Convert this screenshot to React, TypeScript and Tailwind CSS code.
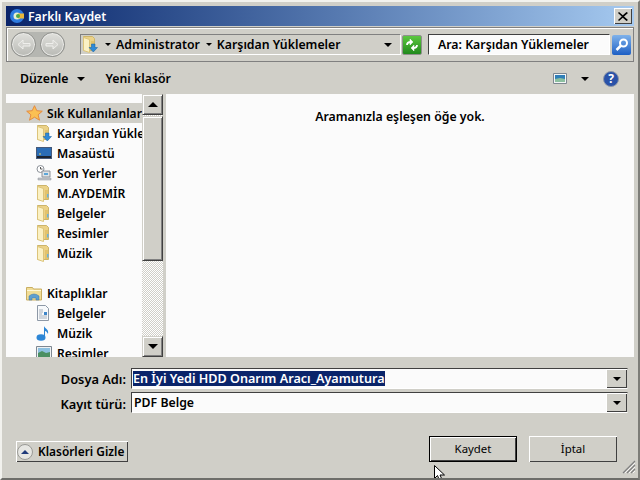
import type { ReactNode } from 'react'

const face = "font-['Noto_Sans','DejaVu_Sans',sans-serif]"

function Folder({ arrow }: { arrow?: boolean }) {
  return (
    <svg width="16" height="17" viewBox="0 0 16 17">
      <path d="M1.500.500h9l2 2v12h-11z" fill="#ecd288" stroke="#cdb56a" />
      <path d="M1.500 1.500l6 2v13l-6-2z" fill="#fbf1c4" stroke="#dcc47a" />
      <path d="M9 5h3v9H9z" fill="#e2c36c" />
      {arrow ? <path d="M9.500 8h3.500v3.500h2.500L11.300 16 7 11.500h2.500z" fill="#2f8ad8" stroke="#14609f" strokeWidth="0.500" /> : <path d="M11 9h1.500v3.500H11z" fill="#6cb3da" />}
    </svg>
  )
}

function Star() {
  return (
    <svg width="17" height="16" viewBox="0 0 17 16">
      <path d="M8.500 .700l2.300 5 5.500.500-4.200 3.600 1.400 5.400-5-3-5 3 1.400-5.400L.700 6.200l5.500-.500z" fill="#fbc053" stroke="#e58b3e" />
    </svg>
  )
}

function Desktop() {
  return (
    <svg width="16" height="14" viewBox="0 0 16 14">
      <path d="M0 1h16v12H0z" fill="#45597a" />
      <path d="M1 2h14v8H1z" fill="#2a6cb5" />
      <path d="M1 10h14v2H1z" fill="#1c2430" />
      <path d="M3 8l1-1 1 1-1 1z" fill="#e9d66b" />
    </svg>
  )
}

function Recent() {
  return (
    <svg width="16" height="16" viewBox="0 0 16 16">
      <circle cx="4.500" cy="4" r="3.500" fill="#fff" stroke="#8d9299" />
      <path d="M4.500 2v2h2" fill="none" stroke="#555" />
      <path d="M6 6h8v6H6z" fill="#dfe3e6" stroke="#8d9299" />
      <path d="M8 8h4v2H8z" fill="#5ca6d8" />
      <path d="M2 13h13v2H2z" fill="#c3c7cb" stroke="#8d9299" strokeWidth="0.500" />
    </svg>
  )
}

function Library() {
  return (
    <svg width="16" height="15" viewBox="0 0 16 15">
      <path d="M.500 14V1.500h6l1 1.500h8v11z" fill="#f1dd97" stroke="#c9ae62" />
      <path d="M1 4h14v1H1z" fill="#fff8d8" />
      <path d="M3 14v-4q5-4 10 0v4h-3v-2H6v2z" fill="#5f9fd0" stroke="#3b76a8" strokeWidth="0.500" />
    </svg>
  )
}

function DocIcon() {
  return (
    <svg width="14" height="16" viewBox="0 0 14 16">
      <path d="M1.500.500h8l3 3v12h-11z" fill="#f7f9fb" stroke="#8d98a6" />
      <path d="M3 5h4M3 7h4M3 9h3M3 11h8M3 13h8" stroke="#a7b0bc" />
      <path d="M8 7h3v3H8z" fill="#3f86c9" />
    </svg>
  )
}

function Note() {
  return (
    <svg width="14" height="16" viewBox="0 0 14 16">
      <ellipse cx="5" cy="12.500" rx="4.500" ry="3.200" fill="#2c86d6" />
      <path d="M8 12V1c1 3 5 3 4 8-1-2-2-3-3-3v6z" fill="#2c86d6" />
    </svg>
  )
}

function Picture() {
  return (
    <svg width="16" height="14" viewBox="0 0 16 14">
      <path d="M.500.500h15v13H.500z" fill="#eef1f3" stroke="#7d8791" />
      <path d="M2 2h12v5H2z" fill="#8cc0e0" />
      <path d="M2 7l4-2 4 2 4-1v6H2z" fill="#4b8f62" />
    </svg>
  )
}

function NavRow({ icon, label, top, active }: { icon: ReactNode; label: string; top?: boolean; active?: boolean }) {
  return (
    <div className={`flex h-5 shrink-0 items-center ${active ? 'bg-[#d0cfc8]' : ''} ${top ? 'pl-[20px]' : 'pl-[30px]'}`}>
      <span className="flex w-[21px] shrink-0 items-center justify-start">{icon}</span>
      <span className="whitespace-nowrap pt-[2px]">{label}</span>
    </div>
  )
}

function ScrollBtn({ up }: { up?: boolean }) {
  return (
    <div className="flex h-[21px] w-[21px] shrink-0 items-center justify-center border border-[#d0cfc8] border-r-[#404040] border-b-[#404040] bg-[#d0cfc8] shadow-[inset_1px_1px_0_#fff,inset_-1px_-1px_0_#808080]">
      <span className={`h-0 w-0 border-x-[5px] border-x-transparent ${up ? 'border-b-[5px] border-b-black' : 'border-t-[5px] border-t-black'}`} />
    </div>
  )
}

function ComboField({ children }: { children: ReactNode }) {
  return (
    <div className="flex h-[21px] w-[497px] items-center justify-between border border-[#404040] border-r-[#d0cfc8] border-b-white bg-[#fbfbfb] pl-[1px]">
      {children}
      <div className="flex h-[19px] w-[21px] shrink-0 items-center justify-center bg-[#d0cfc8] shadow-[inset_1px_1px_0_#fff,inset_-1px_-1px_0_#404040]">
        <span className="h-0 w-0 border-x-[4px] border-t-[4px] border-x-transparent border-t-black" />
      </div>
    </div>
  )
}

function Caret({ className = '' }: { className?: string }) {
  return <span className={`h-0 w-0 border-x-[3px] border-t-[3px] border-x-transparent border-t-black ${className}`} />
}

function NavCircle({ dim }: { dim?: boolean }) {
  return (
    <div className="flex h-[25px] w-[25px] items-center justify-center rounded-full border border-[#8f908c] bg-gradient-to-b from-[#e0e0dc] to-[#b9bab5] shadow-[inset_0_0_0_1px_#e9e9e6]">
      <svg width="15" height="13" viewBox="0 0 15 13">
        <path d={dim ? 'M1 5.500h7V2l5 4.500-5 4.500V8H1z' : 'M14 5.500H7V2L2 6.500 7 11V8h7z'} fill="#d4d4d0" stroke="#efefec" />
      </svg>
    </div>
  )
}

export default function App() {
  return (
    <div className={`${face} relative flex h-[480px] w-[640px] flex-col overflow-hidden border-2 border-t-[#f2f2ee] border-l-[#f2f2ee] border-r-[#7d7d78] border-b-[#6e6e6a] bg-[#d0cfc8] px-[4px] pt-[4px] text-[12.3px] font-semibold leading-none text-black`}>
      {/* title */}
      <div className="flex h-[20px] shrink-0 items-center justify-between bg-gradient-to-r from-[#0a246a] to-[#a6caf0] pl-[4px] pr-[2px] text-white">
        <div className="flex items-center gap-[2px]">
          <svg width="16" height="16" viewBox="0 0 16 16">
            <circle cx="7" cy="8" r="7" fill="#2d7be0" />
            <circle cx="7" cy="8" r="3.500" fill="#e8f0d0" />
            <path d="M8 5.500h6v5H8z" fill="#e9b83a" />
            <circle cx="8" cy="8" r="2" fill="#4aa84a" />
          </svg>
          <span className="pt-[2px]">Farklı Kaydet</span>
        </div>
        <div className="flex h-[16px] w-[18px] items-center justify-center bg-[#d0cfc8] shadow-[inset_1px_1px_0_#fff,inset_-1px_-1px_0_#404040]">
          <svg width="10" height="9" viewBox="0 0 10 9"><path d="M1 0l3.800 3.300L8.500 0 10 1 6 4.500 10 8 8.500 9 4.800 5.700 1 9 0 8l3.800-3.500L0 1z" fill="#000" /></svg>
        </div>
      </div>

      {/* address bar */}
      <div className="mt-px flex h-[35px] shrink-0 items-center border border-[#808080] pl-[4px] shadow-[inset_1px_1px_0_#fff]">
        <div className="flex w-[54px] shrink-0 justify-between rounded-full bg-[#b5b6b1]">
          <NavCircle />
          <NavCircle dim />
        </div>
        <div className="ml-[15px] flex h-[21px] w-[321px] shrink-0 items-center border border-white border-t-[#808080] border-l-[#808080] pl-[1px]">
          <Folder arrow />
          <Caret className="ml-[7px]" />
          <span className="ml-[5px] whitespace-nowrap pt-[2px]">Administrator</span>
          <Caret className="ml-[6px]" />
          <span className="ml-[5px] whitespace-nowrap pt-[2px]">Karşıdan Yüklemeler</span>
          <span className="ml-auto mr-[8px] h-0 w-0 border-x-[4px] border-t-[4px] border-x-transparent border-t-black" />
        </div>
        <div className="ml-[1px] flex h-[20px] w-[20px] shrink-0 items-center justify-center rounded-[2px] border border-[#8f908c] bg-gradient-to-b from-[#5cc83f] to-[#1f8a1c]">
          <svg width="16" height="14" viewBox="0 0 16 14" fill="none" stroke="#fff" strokeWidth="1.800">
            <path d="M3 7c0-2 1-3 4-3" />
            <path d="M6 1v6l3-3z" fill="#fff" strokeWidth="0.500" />
            <path d="M13 7c0 2-1 3-4 3" />
            <path d="M10 7v6l-3-3z" fill="#fff" strokeWidth="0.500" />
          </svg>
        </div>
        <div className="ml-[6px] flex h-[21px] w-[182px] shrink-0 items-center border border-white border-t-[#404040] border-l-[#404040] bg-[#fbfbfb] pl-[9px] pt-[2px]">Ara: Karşıdan Yüklemeler</div>
        <div className="ml-[2px] flex h-[20px] w-[19px] shrink-0 items-center justify-center rounded-[2px] bg-gradient-to-b from-[#7fb2ea] to-[#1c5fc4]">
          <svg width="16" height="16" viewBox="0 0 16 16"><circle cx="9.500" cy="6" r="3.500" fill="none" stroke="#fff" strokeWidth="2" /><path d="M7 8.500L2.500 13" stroke="#fff" strokeWidth="2.500" /></svg>
        </div>
      </div>

      {/* toolbar */}
      <div className="flex h-[32px] shrink-0 items-center pl-[14px] pr-[15px] pt-[1px]">
        <span className="pt-[1px]">Düzenle</span>
        <span className="ml-[8px] h-0 w-0 border-x-[4px] border-t-[4px] border-x-transparent border-t-black" />
        <span className="ml-[21px] pt-[1px]">Yeni klasör</span>
        <svg className="ml-auto" width="14" height="11" viewBox="0 0 14 11"><path d="M.500.500h13v10H.500z" fill="#f4f6f7" stroke="#7d8791" /><path d="M2 2h10v4H2z" fill="#2f7fb8" /><path d="M2 6l5-1 5 1v3H2z" fill="#8cc0a0" /></svg>
        <span className="ml-[14px] h-0 w-0 border-x-[4px] border-t-[4px] border-x-transparent border-t-black" />
        <div className="ml-[14px] flex h-[16px] w-[16px] items-center justify-center rounded-full border border-[#8c96a8] bg-[#2a52a8] text-[12px] font-bold text-white">?</div>
      </div>

      {/* panes */}
      <div className="flex h-[263px] shrink-0 bg-[#fbfbfb]">
        <div className="flex w-[136px] shrink-0 flex-col overflow-hidden pt-[9px] text-[12.1px]">
          <NavRow top active icon={<Star />} label="Sık Kullanılanlar" />
          <NavRow icon={<Folder arrow />} label="Karşıdan Yüklemeler" />
          <NavRow icon={<Desktop />} label="Masaüstü" />
          <NavRow icon={<Recent />} label="Son Yerler" />
          <NavRow icon={<Folder />} label="M.AYDEMİR" />
          <NavRow icon={<Folder />} label="Belgeler" />
          <NavRow icon={<Folder />} label="Resimler" />
          <NavRow icon={<Folder />} label="Müzik" />
          <div className="h-5 shrink-0" />
          <NavRow top icon={<Library />} label="Kitaplıklar" />
          <NavRow icon={<DocIcon />} label="Belgeler" />
          <NavRow icon={<Note />} label="Müzik" />
          <NavRow icon={<Picture />} label="Resimler" />
        </div>
        <div className="flex w-[21px] shrink-0 flex-col bg-[repeating-conic-gradient(#d0cfc8_0%_25%,#ffffff_0%_50%)] bg-[length:2px_2px]">
          <ScrollBtn up />
          <div className="mt-px h-[145px] w-[21px] shrink-0 border border-[#d0cfc8] border-r-[#404040] border-b-[#404040] bg-[#d0cfc8] shadow-[inset_1px_1px_0_#fff,inset_-1px_-1px_0_#808080]" />
          <div className="flex-1" />
          <ScrollBtn />
        </div>
        <div className="w-[3px] shrink-0 bg-[#d0cfc8]" />
        <div className="flex-1 pt-[17px] text-center">
          Aramanızla eşleşen öğe yok.
        </div>
      </div>

      {/* file fields */}
      <div className="mt-[11px] flex flex-col gap-[3px] pl-[125px]">
        <div className="relative">
          <span className="absolute right-full top-[5px] mr-[5px] whitespace-nowrap text-[12.8px]">Dosya Adı:</span>
          <ComboField><span className="whitespace-nowrap bg-[#0a246a] text-[12.6px] leading-[15px] text-white">En İyi Yedi HDD Onarım Aracı_Ayamutura</span></ComboField>
        </div>
        <div className="relative">
          <span className="absolute right-full top-[6px] mr-[5px] whitespace-nowrap text-[12.8px]">Kayıt türü:</span>
          <ComboField><span className="pl-[1px] pt-[2px]">PDF Belge</span></ComboField>
        </div>
      </div>

      {/* buttons */}
      <div className="mt-[23px] flex items-end pl-[10px]">
        <div className="flex h-[21px] w-[112px] items-center gap-[5px] bg-[#d0cfc8] pl-[1px] text-[11.9px] shadow-[inset_1px_1px_0_#fff,inset_-1px_-1px_0_#404040]">
          <div className="flex h-[16px] w-[16px] shrink-0 items-center justify-center rounded-full border border-[#9a9a96] bg-[#e6e6e2]">
            <span className="h-0 w-0 border-x-[4px] border-b-[4px] border-x-transparent border-b-[#1f3a7a]" />
          </div>
          <span className="whitespace-nowrap">Klasörleri Gizle</span>
        </div>
        <div className="ml-[301px] flex h-[26px] w-[88px] items-center justify-center border border-black bg-[#d0cfc8] text-[11.4px] font-normal shadow-[inset_1px_1px_0_#fff,inset_-1px_-1px_0_#404040]">Kaydet</div>
        <div className="ml-[12px] flex h-[26px] w-[88px] items-center justify-center bg-[#d0cfc8] text-[11.4px] font-normal shadow-[inset_1px_1px_0_#fff,inset_-1px_-1px_0_#404040]">İptal</div>
      </div>

      {/* size grip */}
      <svg className="absolute bottom-[4px] right-[2px]" width="14" height="14" viewBox="0 0 14 14">
        <path d="M1 13L13 1M5 13l8-8M9 13l4-4" stroke="#808080" strokeWidth="1.200" />
        <path d="M3 13L13 3M7 13l6-6M11 13l2-2" stroke="#fff" strokeWidth="0.800" />
      </svg>

      {/* mouse cursor */}
      <svg className="absolute left-[432px] top-[463px]" width="13" height="16" viewBox="0 0 13 16">
        <path d="M.500.500v13l3-3 2 5 2.500-1-2-4.500h4.500z" fill="#fff" stroke="#000" />
      </svg>
    </div>
  )
}
